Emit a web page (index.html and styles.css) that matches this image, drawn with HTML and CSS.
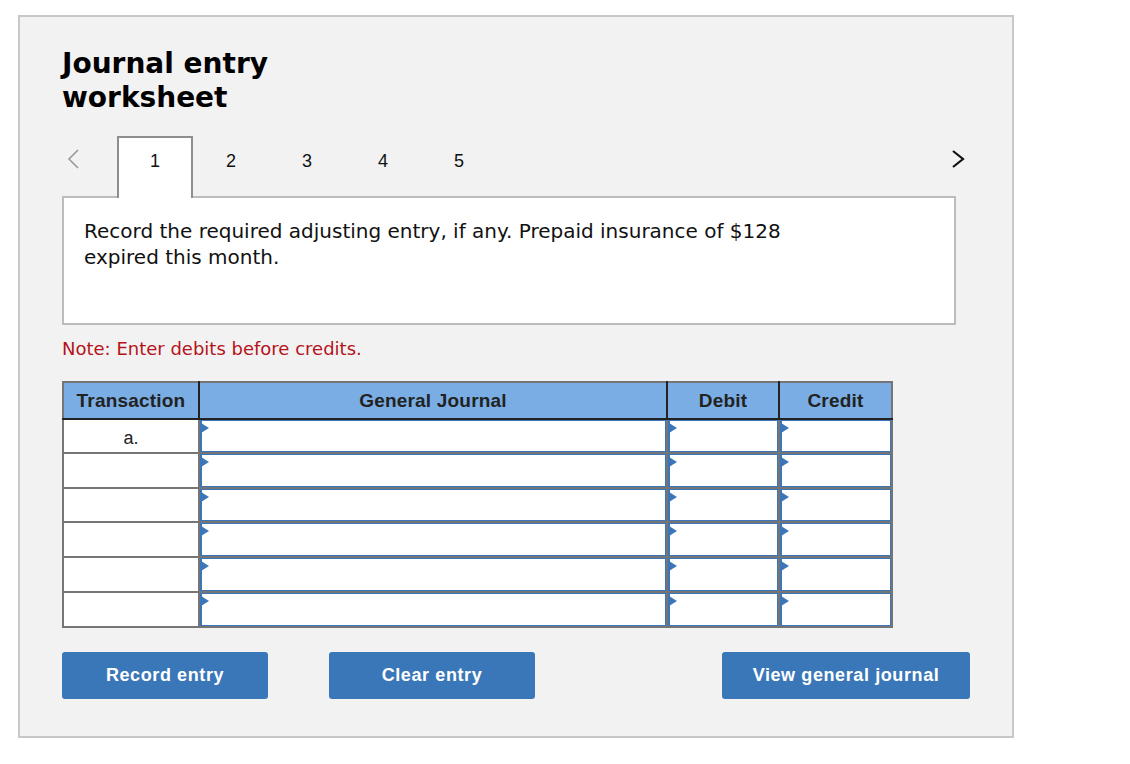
FILE: index.html
```html
<!DOCTYPE html>
<html lang="en">
<head>
    <meta charset="UTF-8">
    <title>Journal entry worksheet</title>
    <link rel="stylesheet" href="styles.css">
</head>
<body>

    <div class="worksheet">
        <h2 class="title">Journal entry<br>worksheet</h2>

        <div class="tab-bar">
            <div class="tabs">
                <button class="arrow prev" aria-label="Previous">
                    <svg width="14" height="20" viewBox="0 0 14 20"><polyline points="12,1 3,10 12,19" fill="none" stroke="#999" stroke-width="1.6"/></svg>
                </button>
                <button class="tab active">1</button>
                <button class="tab">2</button>
                <button class="tab">3</button>
                <button class="tab">4</button>
                <button class="tab">5</button>
            </div>
            <button class="arrow next" aria-label="Next">
                <svg width="16" height="20" viewBox="0 0 16 20"><polyline points="3,2 13,10 3,18" fill="none" stroke="#111" stroke-width="2.2"/></svg>
            </button>
        </div>

        <div class="question">
            <p>Record the required adjusting entry, if any. Prepaid insurance of $128 expired this month.</p>
        </div>

        <p class="note">Note: Enter debits before credits.</p>

        <table class="journal">
            <colgroup>
                <col style="width: 136px">
                <col style="width: 468px">
                <col style="width: 112px">
                <col style="width: 113px">
            </colgroup>
            <thead>
                <tr>
                    <th>Transaction</th>
                    <th>General Journal</th>
                    <th>Debit</th>
                    <th>Credit</th>
                </tr>
            </thead>
            <tbody>
                <tr class="short">
                    <td class="trans">a.</td>
                    <td><div class="field"></div></td>
                    <td><div class="field"></div></td>
                    <td><div class="field"></div></td>
                </tr>
                <tr>
                    <td class="trans"></td>
                    <td><div class="field"></div></td>
                    <td><div class="field"></div></td>
                    <td><div class="field"></div></td>
                </tr>
                <tr class="short">
                    <td class="trans"></td>
                    <td><div class="field"></div></td>
                    <td><div class="field"></div></td>
                    <td><div class="field"></div></td>
                </tr>
                <tr>
                    <td class="trans"></td>
                    <td><div class="field"></div></td>
                    <td><div class="field"></div></td>
                    <td><div class="field"></div></td>
                </tr>
                <tr>
                    <td class="trans"></td>
                    <td><div class="field"></div></td>
                    <td><div class="field"></div></td>
                    <td><div class="field"></div></td>
                </tr>
                <tr>
                    <td class="trans"></td>
                    <td><div class="field"></div></td>
                    <td><div class="field"></div></td>
                    <td><div class="field"></div></td>
                </tr>
            </tbody>
        </table>

        <div class="actions">
            <button class="btn">Record entry</button>
            <button class="btn">Clear entry</button>
            <button class="btn wide">View general journal</button>
        </div>
    </div>

</body>
</html>
```

FILE: styles.css
```css
body {
    margin: 0;
    background: #fff;
    font-family: "DejaVu Sans", Verdana, sans-serif;
    color: #111;
}
.worksheet {
    margin: 15px 0 0 18px;
    width: 908px;
    padding: 30px 42px 37px 42px;
    background: #f2f2f2;
    border: 2px solid #c8c8c8;
}
.title {
    margin: 0;
    font-size: 28px;
    line-height: 34px;
    font-weight: bold;
    color: #000;
}
.tab-bar {
    display: flex;
    justify-content: space-between;
    align-items: flex-start;
    margin-top: 21px;
    height: 60px;
}
.tabs {
    display: flex;
}
button {
    font-family: inherit;
    cursor: pointer;
}
.arrow {
    background: none;
    border: none;
    padding: 0;
    margin-top: 13px;
    height: 22px;
}
.arrow.prev {
    width: 55px;
    text-align: left;
    padding-left: 4px;
}
.arrow.next {
    margin-right: 4px;
}
.tab {
    width: 76px;
    height: 62px;
    padding: 13px 0 27px;
    background: none;
    border: 2px solid transparent;
    border-bottom: none;
    font-family: "Liberation Sans", Arial, sans-serif;
    font-size: 18px;
    line-height: 20px;
    color: #111;
}
.tab.active {
    background: #fff;
    border-color: #8e8e8e;
    position: relative;
    z-index: 1;
}
.question {
    width: 894px;
    box-sizing: border-box;
    height: 129px;
    background: #fff;
    border: 2px solid #bcbcbc;
    padding: 20px 20px;
}
.question p {
    margin: 0;
    max-width: 740px;
    font-size: 20px;
    line-height: 26px;
}
.note {
    margin: 14px 0 0;
    font-size: 18px;
    line-height: 20px;
    color: #b5121b;
}
.journal {
    margin-top: 22px;
    width: 829px;
    table-layout: fixed;
    border-collapse: collapse;
    border: 2px solid #757575;
    font-family: "Liberation Sans", Arial, sans-serif;
}
.journal th {
    height: 35px;
    padding: 0;
    background: #79ade4;
    color: #222;
    font-size: 19px;
    letter-spacing: 0.2px;
    font-weight: bold;
    border: 2px solid #222;
    border-top-color: #757575;
}
.journal th:first-child {
    border-left-color: #757575;
}
.journal th:last-child {
    border-right-color: #757575;
}
.journal td {
    height: 33px;
    padding: 0;
    background: #fff;
    border: 2px solid #757575;
    vertical-align: top;
}
.journal tr.short td {
    height: 32px;
}
.journal td.trans {
    text-align: center;
    font-size: 18px;
    line-height: 26px;
    color: #222;
}
.journal td.trans:not(:empty) {
    padding-top: 5px;
    height: 27px;
}
.field {
    position: relative;
    height: 33px;
    box-sizing: border-box;
    border: 1px solid #3a76b9;
    border-left-width: 2px;
}
.short .field {
    height: 32px;
}
.field::before {
    content: "";
    position: absolute;
    left: -1px;
    top: 2px;
    border-top: 5px solid transparent;
    border-bottom: 5px solid transparent;
    border-left: 8px solid #3a76b9;
}
.actions {
    display: flex;
    gap: 61px;
    margin-top: 24px;
}
.btn {
    width: 206px;
    height: 47px;
    background: #3a77b9;
    color: #fff;
    border: none;
    border-radius: 3px;
    font-family: "Liberation Sans", Arial, sans-serif;
    font-size: 18px;
    letter-spacing: 0.6px;
    font-weight: bold;
}
.btn.wide {
    width: 248px;
    margin-left: auto;
}
```
